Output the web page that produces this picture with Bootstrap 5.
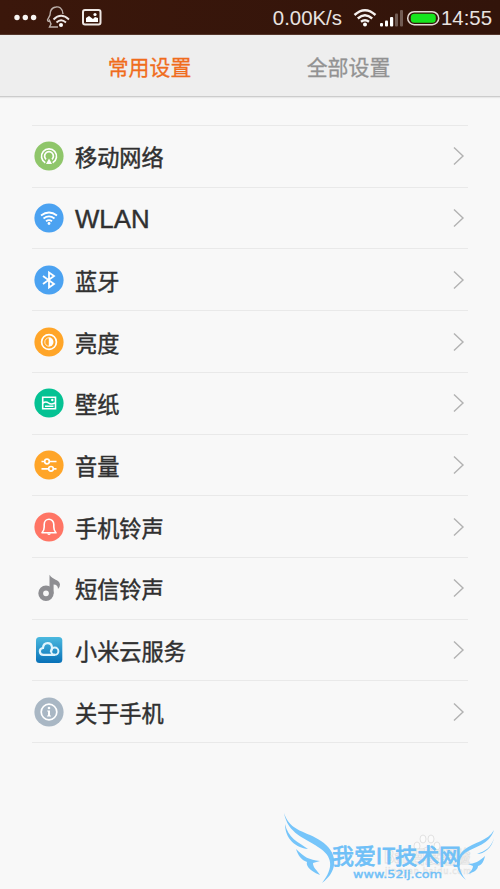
<!DOCTYPE html>
<html lang="zh-CN">
<head>
<meta charset="utf-8">
<meta name="viewport" content="width=device-width, initial-scale=1">
<title>设置</title>
<link href="https://cdn.jsdelivr.net/npm/bootstrap@5.3.0/dist/css/bootstrap.min.css" rel="stylesheet">
<style>
body{font-family:"Noto Sans CJK SC",sans-serif;background:#f8f8f8;color:#333}
.phone{width:500px;height:889px;overflow:hidden}
.statusbar{height:35px;background:linear-gradient(90deg,#3b170b,#32140a);border-bottom:1px solid #54362b;color:#e9e3e0;padding:0 8px 0 13px}
.statusbar span{font:20.4px/36px "Liberation Sans",sans-serif;white-space:nowrap;padding-top:1px}
.tabs{height:62px;background:#eee;border-bottom:1px solid #ccc;box-shadow:0 1px 1px #e8e8e8;padding:0 50px}
.tabs a{width:199px;font-size:20.9px;line-height:62px;color:#929292;-webkit-text-stroke:.3px;text-decoration:none}
.tabs a.active{color:#f06c1c}
.settings{margin:28px 32px 0;border-top:1px solid #e9e9e9}
.setting{height:61.72px;border-bottom:1px solid #e9e9e9;padding:0 3px 0 2px;color:#303030;text-decoration:none}
.setting .title{font-size:22.2px;line-height:60px;margin-left:11px;-webkit-text-stroke:.45px}
.setting .latin{font:25.8px/60px "Liberation Sans",sans-serif;-webkit-text-stroke:.4px;padding-top:2px}
.brandmark{left:270px;top:800px}
</style>
</head>
<body>
<main class="phone position-relative">
<header class="statusbar d-flex align-items-center">
  <svg width="90" height="34" fill="none" stroke="#eee7e4">
    <g fill="#f8f5f3" stroke="none"><circle cx="4" cy="17.5" r="2.7"/><circle cx="12.3" cy="17.5" r="2.7"/><circle cx="20.6" cy="17.5" r="2.7"/></g>
    <path d="M50 14C49.500 8 46 6.500 43 7C38.500 7.500 37 11 37 15L34.500 20C34.500 21.500 36 21.500 36.500 20.500L38 24L36.500 27H45" stroke-width="1.400" stroke="#bdb0aa"/>
    <path d="M40.500 19.500Q48 12 56 19.500M43.500 22.500Q48 18 53 22.500" stroke-width="1.800"/><circle cx="48" cy="25" r="2" fill="#fff" stroke="none"/>
    <rect x="70" y="10" width="17.500" height="14.500" rx="2" stroke-width="2"/><path d="M73 22V18L76 16L80 19L82 17L85 18V22Z" fill="#fff" stroke="none"/><circle cx="82" cy="14.500" r="1.600" fill="#fff" stroke="none"/>
  </svg>
  <span class="ms-auto">0.00K/s</span>
  <svg class="ms-2" width="91" height="34" viewBox="350 0 91 34" fill="none">
    <g stroke="#f5f1ef" stroke-width="2.400"><path d="M354.500 15Q365 5.500 375.500 15M357.800 18.500Q365 12 372.200 18.500M361 21.800Q365 18.500 369 21.800"/></g><circle cx="365" cy="24.500" r="2" fill="#fff"/>
    <g fill="#fff"><rect x="380" y="23" width="3" height="3.500" rx="1"/><rect x="385" y="20.500" width="3" height="6" rx="1"/><rect x="390" y="17" width="3.200" height="9.500" rx="1"/></g>
    <g fill="#725c54"><rect x="395" y="13.500" width="3" height="13" rx="1"/><rect x="400" y="10" width="3" height="16.500" rx="1"/></g>
    <rect x="407.700" y="11.700" width="31" height="13" rx="6.500" stroke="#e4dad6" stroke-width="1.500"/><rect x="410.800" y="13.700" width="25" height="9" rx="3.500" fill="#16e51d"/>
  </svg>
  <span>14:55</span>
</header>
<nav class="tabs d-flex text-center">
  <a class="active" href="#">常用设置</a><a href="#">全部设置</a>
</nav>
<section class="settings">
  <a class="setting d-flex align-items-center" href="#"><svg width="30" height="30" viewBox="0 0 30 30"><circle cx="15" cy="15" r="14.600" fill="#8fc66a"/><g fill="none" stroke="#fff" stroke-width="1.700"><path d="M11.300 21.800A7.500 7.500 0 1 1 18.700 21.800M12 18.300A4.400 4.400 0 1 1 18 18.300"/></g><path d="M15 17.500L18 23H12Z" fill="#fff"/></svg><span class="title">移动网络</span><svg class="ms-auto" width="12" height="20" fill="none" stroke="#b2b2b2" stroke-width="1.400"><path d="M1 1.500L10 10L1 18.500"/></svg></a>
  <a class="setting d-flex align-items-center" href="#"><svg width="30" height="30" viewBox="0 0 30 30"><circle cx="15" cy="15" r="14.600" fill="#4ba2f1"/><g fill="none" stroke="#fff" stroke-width="1.800"><path d="M7 12.500Q15 6.500 23 12.500M9.500 15.500Q15 11.300 20.500 15.500M12 18.300Q15 16 18 18.300"/></g><circle cx="15" cy="20.500" r="1.400" fill="#fff"/></svg><span class="title latin">WLAN</span><svg class="ms-auto" width="12" height="20" fill="none" stroke="#b2b2b2" stroke-width="1.400"><path d="M1 1.500L10 10L1 18.500"/></svg></a>
  <a class="setting d-flex align-items-center" href="#"><svg width="30" height="30" viewBox="0 0 30 30"><circle cx="15" cy="15" r="14.600" fill="#4ba2f1"/><path d="M9 11L20 19L15 22.500V7.500L20 11L9 19" fill="none" stroke="#fff" stroke-width="1.800"/></svg><span class="title">蓝牙</span><svg class="ms-auto" width="12" height="20" fill="none" stroke="#b2b2b2" stroke-width="1.400"><path d="M1 1.500L10 10L1 18.500"/></svg></a>
  <a class="setting d-flex align-items-center" href="#"><svg width="30" height="30" viewBox="0 0 30 30"><circle cx="15" cy="15" r="14.600" fill="#ffa528"/><circle cx="15" cy="15" r="7.400" fill="none" stroke="#fff" stroke-width="1.700"/><path d="M15 10.800A4.200 4.200 0 0 0 15 19.200" fill="none" stroke="#fff" stroke-width=".8"/><path d="M14.800 10.300A4.700 4.700 0 0 1 14.800 19.700Z" fill="#fff"/></svg><span class="title">亮度</span><svg class="ms-auto" width="12" height="20" fill="none" stroke="#b2b2b2" stroke-width="1.400"><path d="M1 1.500L10 10L1 18.500"/></svg></a>
  <a class="setting d-flex align-items-center" href="#"><svg width="30" height="30" viewBox="0 0 30 30"><circle cx="15" cy="15" r="14.600" fill="#05c293"/><path d="M8.700 9.200H21.500V20.800H8.700ZM9 15Q12 13 14.500 15T21 15M11 18.200H19.500" fill="none" stroke="#fff" stroke-width="1.600"/><circle cx="18.300" cy="12" r="1.200" fill="#fff"/></svg><span class="title">壁纸</span><svg class="ms-auto" width="12" height="20" fill="none" stroke="#b2b2b2" stroke-width="1.400"><path d="M1 1.500L10 10L1 18.500"/></svg></a>
  <a class="setting d-flex align-items-center" href="#"><svg width="30" height="30" viewBox="0 0 30 30"><circle cx="15" cy="15" r="14.600" fill="#ffa528"/><g fill="none" stroke="#fff" stroke-width="1.700"><path d="M7.500 11.500H10.500M15.500 11.500H22.500M7.500 18.800H14.500M19.500 18.800H22.500"/><circle cx="13" cy="11.500" r="2.300"/><circle cx="17" cy="18.800" r="2.300"/></g></svg><span class="title">音量</span><svg class="ms-auto" width="12" height="20" fill="none" stroke="#b2b2b2" stroke-width="1.400"><path d="M1 1.500L10 10L1 18.500"/></svg></a>
  <a class="setting d-flex align-items-center" href="#"><svg width="30" height="30" viewBox="0 0 30 30"><circle cx="15" cy="15" r="14.600" fill="#ff7565"/><path d="M8 20.800Q10.200 18.500 10.200 15V12.500C10.200 5.500 19.800 5.500 19.800 12.500V15Q19.800 18.500 22 20.800Z" fill="none" stroke="#fff" stroke-width="1.600" stroke-linejoin="round"/><path d="M13 21.500H17Q15 24.500 13 21.500" fill="#fff"/></svg><span class="title">手机铃声</span><svg class="ms-auto" width="12" height="20" fill="none" stroke="#b2b2b2" stroke-width="1.400"><path d="M1 1.500L10 10L1 18.500"/></svg></a>
  <a class="setting d-flex align-items-center" href="#"><svg width="30" height="30" viewBox="0 0 30 30"><circle cx="12" cy="20.300" r="5.300" fill="none" stroke="#8e8e92" stroke-width="4.800"/><path d="M15.500 1.800C18.500 7 25.500 6.500 26 11.500Q26 14 24 16Q24 11.500 19.600 11.500V20.500H15.500Z" fill="#8e8e92"/></svg><span class="title">短信铃声</span><svg class="ms-auto" width="12" height="20" fill="none" stroke="#b2b2b2" stroke-width="1.400"><path d="M1 1.500L10 10L1 18.500"/></svg></a>
  <a class="setting d-flex align-items-center" href="#"><svg width="30" height="30" viewBox="0 0 30 30"><defs><linearGradient id="cloudBlue" x2="0" y2="1"><stop stop-color="#4bb9df"/><stop offset="1" stop-color="#0871b8"/></linearGradient></defs><rect x="2" y="2" width="26.300" height="26" rx="3.500" fill="url(#cloudBlue)"/><path d="M21 19.800H9.500C5 19.800 4.500 13.500 9 13C9.500 6.500 17.500 6.800 18 12.500Q18 15 16.500 17" fill="none" stroke="#e0f4fc" stroke-width="2.200"/><circle cx="20.800" cy="16.200" r="3.600" fill="none" stroke="#e0f4fc" stroke-width="2"/></svg><span class="title">小米云服务</span><svg class="ms-auto" width="12" height="20" fill="none" stroke="#b2b2b2" stroke-width="1.400"><path d="M1 1.500L10 10L1 18.500"/></svg></a>
  <a class="setting d-flex align-items-center" href="#"><svg width="30" height="30" viewBox="0 0 30 30"><circle cx="15" cy="15" r="14.600" fill="#a9b7c4"/><circle cx="15" cy="15" r="7.800" fill="none" stroke="#fff" stroke-width="1.700"/><circle cx="15" cy="11" r="1.300" fill="#fff"/><path d="M13.200 13.500H16V18.500H17V19.500H13V18.500H14V14.500H13.200Z" fill="#fff"/></svg><span class="title">关于手机</span><svg class="ms-auto" width="12" height="20" fill="none" stroke="#b2b2b2" stroke-width="1.400"><path d="M1 1.500L10 10L1 18.500"/></svg></a>
</section>
<svg class="brandmark position-absolute" width="230" height="89" viewBox="0 0 230 89">
  <g fill="#fbfbfb" stroke="#e2e2e2"><ellipse cx="147" cy="46" rx="3" ry="4"/><ellipse cx="153" cy="39" rx="3" ry="4"/><ellipse cx="161" cy="39" rx="3" ry="4"/><ellipse cx="167" cy="46" rx="3" ry="4"/><path d="M149 54Q157 40 165 54Q169 62 157 60Q145 62 149 54Z"/>
  <text x="114" y="63" font-size="17" font-weight="700" textLength="86" lengthAdjust="spacingAndGlyphs">Bai 百度经验</text><text x="115" y="74" font-size="8.500" stroke-width=".5" textLength="86">jingyan.baidu.com</text></g>
  <g fill="#76c5fa"><path d="M14 13C20 32 37 31 51 41C67 51 70 70 52 83C64 68 63 56 48 47C35 38 18 34 14 13Z"/><path d="M15 24C18 38 28 42 38 49C26 48 15 39 15 24Z"/><path d="M26 49C34 57 39 60 50 61L43 63C43 68 47 70 50 75C38 70 36 65 37 62C31 60 28 55 26 49Z"/>
  <path d="M224 30C219 45 206 46 195 53C187 59 188 71 196 80C184 70 185 58 194 50C204 42 218 41 224 30Z"/><path d="M224 38C221 48 215 51 207 54C214 54 222 48 224 38Z"/><path d="M215 56C210 61 204 64 198 64L203 66C203 69 201 71 198 74C205 72 208 69 208 66C212 65 214 61 215 56Z"/></g>
  <g fill="#6fc0f7" stroke="#6fc0f7"><text x="62" y="64" font-size="21.500" stroke-width=".8" textLength="129" lengthAdjust="spacingAndGlyphs">我爱IT技术网</text><text x="83" y="77.500" font-family="DejaVu Sans" font-size="10.500" stroke-width=".4" textLength="89" lengthAdjust="spacingAndGlyphs">www.52ij.com</text></g>
</svg>
</main>
<script src="https://cdn.jsdelivr.net/npm/bootstrap@5.3.0/dist/js/bootstrap.bundle.min.js"></script>
</body>
</html>
